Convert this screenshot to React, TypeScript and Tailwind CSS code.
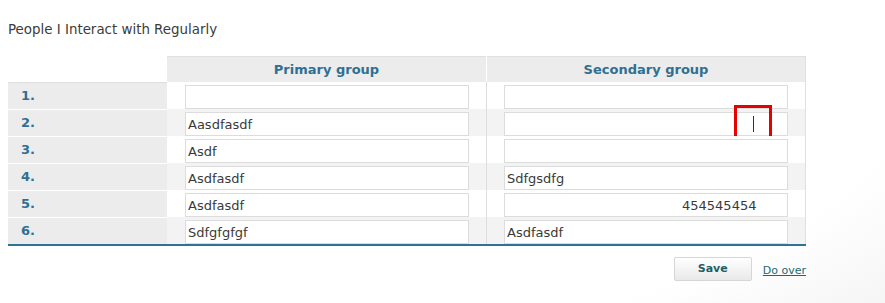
import React from "react"

const rows = [
  { n: "1.", a: "", b: "" },
  { n: "2.", a: "Aasdfasdf", b: "" },
  { n: "3.", a: "Asdf", b: "" },
  { n: "4.", a: "Asdfasdf", b: "Sdfgsdfg" },
  { n: "5.", a: "Asdfasdf", b: "454545454" },
  { n: "6.", a: "Sdfgfgfgf", b: "Asdfasdf" },
]

function Field({ value, indent }: { value: string; indent?: boolean }) {
  return (
    <div
      className={
        "h-[24px] w-[284px] border border-[#dcdcdc] bg-white flex items-center text-[13px] text-[#3a3a3a] leading-none " +
        (indent ? "pl-[177px]" : "pl-[2px]")
      }
    >
      {value}
    </div>
  )
}

export default function App() {
  return (
    <div
      className="w-[885px] h-[303px] overflow-hidden bg-[radial-gradient(ellipse_120%_140%_at_20%_20%,#ffffff_70%,#efefef_100%)] pl-[8px]"
      style={{ fontFamily: "'DejaVu Sans', Verdana, sans-serif" }}
    >
      <div className="pt-[20px] h-[56px] text-[13.4px] text-[#3b3b3b]">People I Interact with Regularly</div>

      <div className="w-[798px]">
        {/* header */}
        <div className="flex h-[26px]">
          <div className="w-[159px]" />
          <div className="w-[319px] bg-[#ececec] border-t border-[#e0e0e0] flex items-center justify-center text-[13px] font-bold text-[#2e7093]">
            Primary group
          </div>
          <div className="w-[1px] bg-white" />
          <div className="w-[319px] bg-[#ececec] border-t border-r border-[#e0e0e0] flex items-center justify-center text-[13px] font-bold text-[#2e7093]">
            Secondary group
          </div>
        </div>

        {rows.map((r, i) => (
          <div key={r.n} className="flex h-[27px]">
            <div
              className={
                "w-[159px] bg-[#ececec] flex items-center pl-[13px] text-[13px] font-bold text-[#2e7093] " +
                (i === 0 ? "border-t border-[#dedede]" : "border-t border-white")
              }
            >
              {r.n}
            </div>
            <div className={"w-[319px] pl-[18px] pt-[3px] " + (i % 2 ? "bg-[#f3f3f3]" : "bg-white")}>
              <Field value={r.a} />
            </div>
            <div className="w-[1px] bg-[#dddddd]" />
            <div
              className={
                "relative w-[319px] pl-[17px] pt-[3px] border-r border-[#e0e0e0] " + (i % 2 ? "bg-[#f3f3f3]" : "bg-white")
              }
            >
              <Field value={r.b} indent={r.b === "454545454"} />
              {i === 1 && (
                <div className="absolute left-[247px] top-[-4px] w-[38px] h-[36px] border-[3px] border-[#e60000]">
                  <div className="absolute left-[16px] top-[8px] w-[1px] h-[16px] bg-[#333333]" />
                </div>
              )}
            </div>
          </div>
        ))}
        <div className="h-[2px] bg-[#2f7393]" />
      </div>

      <div className="w-[798px] flex justify-end items-end pt-[11px]">
        <button className="w-[78px] h-[24px] rounded-[2px] border border-[#d6d6d6] bg-gradient-to-b from-white to-[#e9e9e9] text-[11px] font-bold text-[#1e5f66]">
          Save
        </button>
        <a className="ml-[11px] mb-[2px] text-[11px] text-[#1e6a74] underline">Do over</a>
      </div>
    </div>
  )
}
